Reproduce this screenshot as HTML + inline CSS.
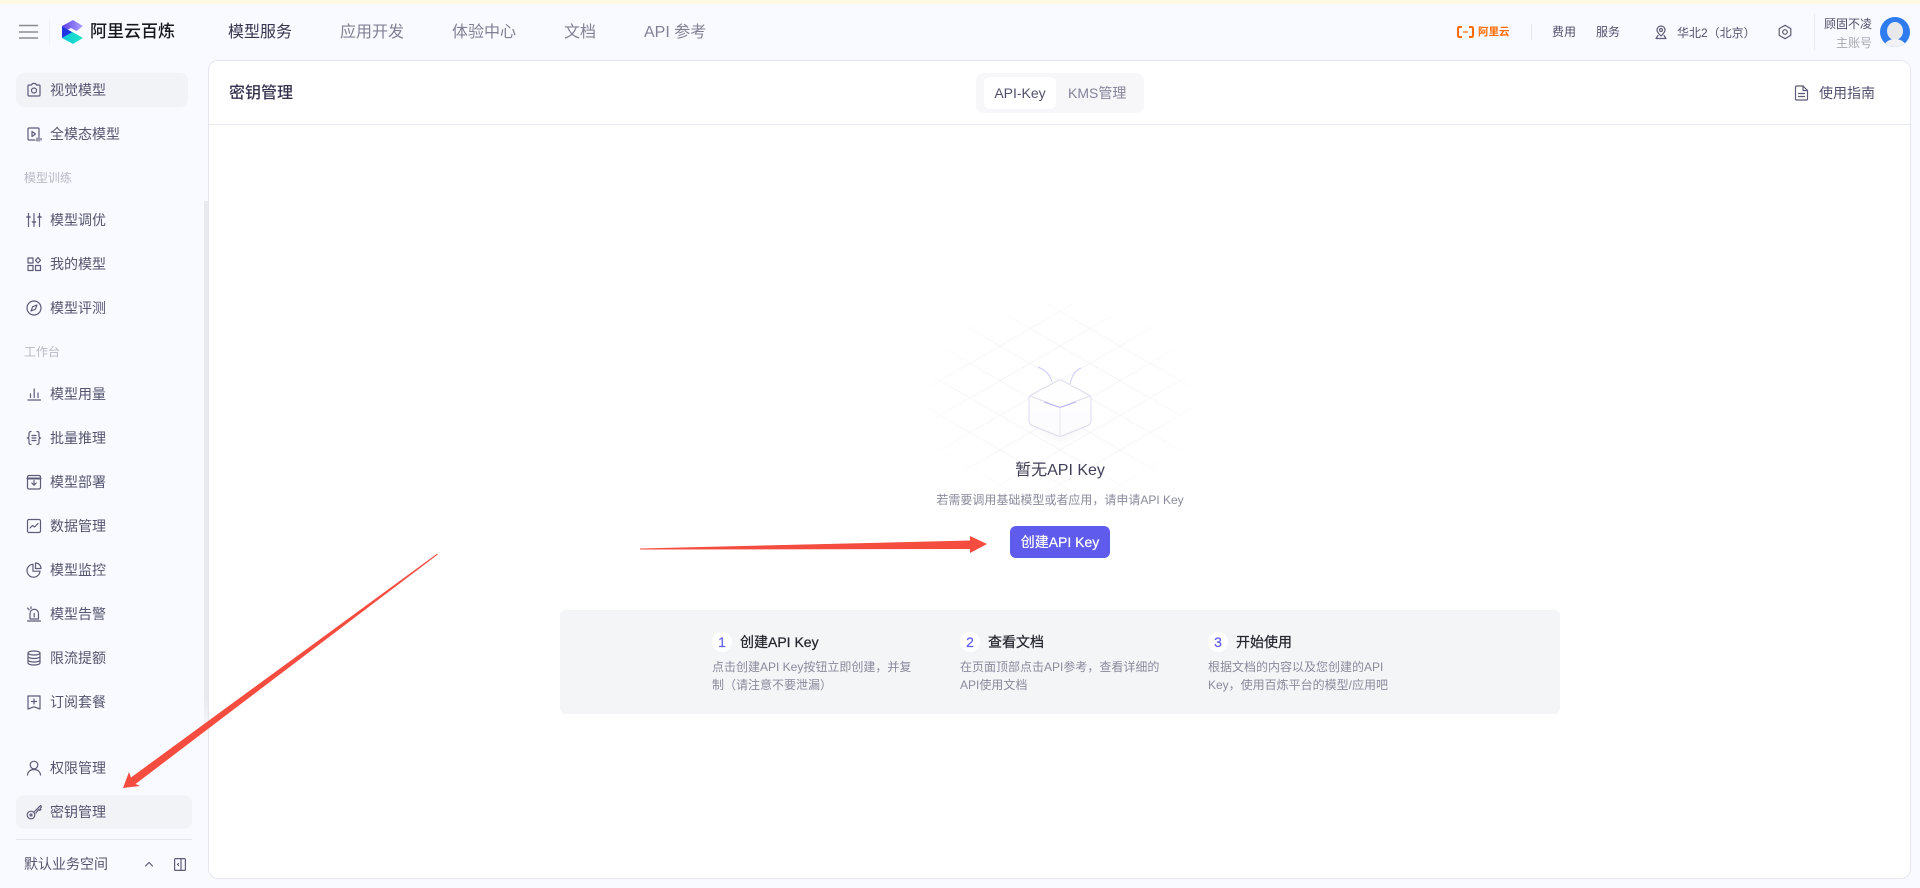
<!DOCTYPE html>
<html lang="zh-CN"><head><meta charset="utf-8"><title>阿里云百炼</title>
<style>
*{box-sizing:border-box}
html,body{margin:0;padding:0;width:1920px;height:888px;overflow:hidden;background:#f9faff}
body{position:relative;font-family:"Liberation Sans","Noto Sans CJK SC",sans-serif;color:#4a4a68}
.t{position:absolute;white-space:nowrap;height:24px;line-height:24px}
.b{position:absolute}
.m{left:50px;font-size:14px;color:#55556f}
.s{left:24px;font-size:12px;color:#b9b9c6}
.n{font-size:16px;color:#808094}
.r{font-size:12px;color:#50506c}
.d{font-size:12px;color:#8a8a9c;height:18px;line-height:18px}
.h{font-size:14px;color:#26262e;-webkit-text-stroke:.25px #26262e}
.c{position:absolute;width:20px;height:20px;border-radius:50%;background:#fff;color:#5f5ced;font-size:14px;line-height:20px;text-align:center;top:632px;-webkit-text-stroke:.2px #5f5ced}
svg.i{position:absolute;fill:none;stroke:#5c5c78;stroke-width:1.2;stroke-linecap:round;stroke-linejoin:round}
</style></head><body>
<div class="b" style="left:0;top:0;width:1920px;height:4px;background:#fff9e3"></div>

<!-- top bar -->
<svg class="i" style="left:19px;top:24px;stroke:#8c8c8c;stroke-width:1.6" width="20" height="16" viewBox="0 0 20 16"><path d="M0 1.500H18.500M0 8H18.500M0 14H18.500"/></svg>
<div class="b" style="left:49px;top:19px;width:1px;height:26px;background:#f0f0f5"></div>
<svg class="b" style="left:0;top:0" width="100" height="50" viewBox="0 0 100 50">
<defs><linearGradient id="g1" x1="0" y1="0" x2="1" y2="0"><stop offset="0" stop-color="#5a3fe8"/><stop offset="1" stop-color="#b0a4ff"/></linearGradient>
<linearGradient id="g2" x1="0" y1="0" x2="1" y2="0"><stop offset="0" stop-color="#0fc6d8"/><stop offset="1" stop-color="#1fe8c8"/></linearGradient></defs>
<path d="M62 26L73 20L83 26L76.500 31L71 28L62 33Z" fill="url(#g1)"/>
<path d="M62 26.500L72.500 32.200L62 38Z" fill="#1c35e0"/>
<path d="M62 38L72.500 32L83 38L73 44Z" fill="url(#g2)"/>
</svg>
<div class="t" style="left:90px;top:20px;font-size:17px;font-weight:500;color:#18181f">阿里云百炼</div>
<div class="t n" style="left:228px;top:21px;color:#35354f">模型服务</div>
<div class="t n" style="left:340px;top:21px">应用开发</div>
<div class="t n" style="left:452px;top:21px">体验中心</div>
<div class="t n" style="left:564px;top:21px">文档</div>
<div class="t n" style="left:644px;top:21px">API 参考</div>

<svg class="b" style="left:1457px;top:26px" width="17" height="12" viewBox="0 0 17 12" fill="none" stroke="#ff6a00" stroke-width="2"><path d="M5 1H2.500Q1 1 1 2.500V9.500Q1 11 2.500 11H5M12 1H14.500Q16 1 16 2.500V9.500Q16 11 14.500 11H12"/><path d="M6 6H11" stroke-width="1.200"/></svg>
<div class="t" style="left:1478px;top:20px;font-size:10.500px;font-weight:700;color:#ff6a00">阿里云</div>
<div class="b" style="left:1531px;top:24px;width:1px;height:16px;background:#e6e7ee"></div>
<div class="t r" style="left:1552px;top:20px">费用</div>
<div class="t r" style="left:1596px;top:20px">服务</div>
<svg class="i" style="left:1654px;top:25px" width="14" height="15" viewBox="0 0 14 15"><path d="M7 1C4.500 1 3 3 3 5C3 7.500 5.500 9.500 7 11C8.500 9.500 11 7.500 11 5C11 3 9.500 1 7 1Z"/><circle cx="7" cy="5" r="1.500"/><path d="M4 10.500L2 13.500H12L10 10.500"/></svg>
<div class="t r" style="left:1677px;top:21px">华北2（北京）</div>
<svg class="i" style="left:1777px;top:24px" width="16" height="16" viewBox="0 0 16 16"><path d="M8 1.300L13.800 4.600V11.400L8 14.700L2.200 11.400V4.600Z"/><circle cx="8" cy="8" r="2.300"/></svg>
<div class="b" style="left:1814px;top:14px;width:1px;height:36px;background:#e9eaf0"></div>
<div class="t r" style="left:1824px;top:12px">顾固不凌</div>
<div class="t r" style="left:1836px;top:31px;color:#a8a8b4">主账号</div>
<svg class="b" style="left:1880px;top:17px" width="30" height="30" viewBox="0 0 30 30"><defs><clipPath id="av"><circle cx="15" cy="15" r="15"/></clipPath></defs><g clip-path="url(#av)"><rect width="30" height="30" fill="#2f7cf0"/><ellipse cx="15" cy="14" rx="8" ry="9" fill="#e8e8ea"/><ellipse cx="15" cy="30" rx="11" ry="8" fill="#f2f2f4"/></g></svg>

<!-- sidebar -->
<div class="b" style="left:204px;top:201px;width:4px;height:540px;background:linear-gradient(#e9eaf0 92%,#f9faff)"></div>
<div class="b" style="left:16px;top:73px;width:172px;height:34px;border-radius:8px;background:#f2f3f7"></div>
<div class="b" style="left:16px;top:795px;width:176px;height:34px;border-radius:8px;background:#f2f3f7"></div>
<div class="b" style="left:16px;top:839px;width:176px;height:1px;background:#e6e7ee"></div>

<svg class="i" style="left:26px;top:82px" width="16" height="16" viewBox="0 0 16 16"><path d="M5.500 3L6.500 1.500H9.500L10.500 3H13Q14 3 14 4V13Q14 14 13 14H3Q2 14 2 13V4Q2 3 3 3Z"/><circle cx="8" cy="8.500" r="2.500"/></svg>
<div class="t m" style="top:78px">视觉模型</div>
<svg class="i" style="left:26px;top:126px" width="16" height="16" viewBox="0 0 16 16"><path d="M9 14H3Q2 14 2 13V3Q2 2 3 2H12Q13 2 13 3V10"/><path d="M6 5.500L9.500 8L6 10.500Z"/><path d="M11 12V15M13 11V15M15 12.500V14"/></svg>
<div class="t m" style="top:122px">全模态模型</div>
<div class="t s" style="top:166px">模型训练</div>
<svg class="i" style="left:26px;top:212px" width="16" height="16" viewBox="0 0 16 16"><path d="M2.500 1.500V14.500M8 1.500V14.500M13.500 1.500V14.500"/><path d="M1 5H4M6.500 10H9.500M12 5H15" stroke-width="1.600"/></svg>
<div class="t m" style="top:208px">模型调优</div>
<svg class="i" style="left:26px;top:256px" width="16" height="16" viewBox="0 0 16 16"><rect x="2" y="2" width="5" height="5"/><rect x="2" y="9.500" width="5" height="5"/><rect x="9.500" y="9.500" width="5" height="5"/><path d="M12 1.500L14.500 4.300L12 7L9.500 4.300Z"/></svg>
<div class="t m" style="top:252px">我的模型</div>
<svg class="i" style="left:26px;top:300px" width="16" height="16" viewBox="0 0 16 16"><circle cx="8" cy="8" r="7"/><path d="M11 5L9.300 9.300L5 11L6.700 6.700Z"/></svg>
<div class="t m" style="top:296px">模型评测</div>
<div class="t s" style="top:340px">工作台</div>
<svg class="i" style="left:26px;top:386px" width="16" height="16" viewBox="0 0 16 16"><path d="M2 14H14.500M4.500 8V11.500M8.200 3V11.500M12 7V11.500"/></svg>
<div class="t m" style="top:382px">模型用量</div>
<svg class="i" style="left:26px;top:430px" width="16" height="16" viewBox="0 0 16 16"><path d="M5 1.500Q3 1.500 3 3.500V6Q3 8 1.300 8Q3 8 3 10V12.500Q3 14.500 5 14.500M11 1.500Q13 1.500 13 3.500V6Q13 8 14.700 8Q13 8 13 10V12.500Q13 14.500 11 14.500M6 5.500H10M6 8H10M6 10.500H10"/></svg>
<div class="t m" style="top:426px">批量推理</div>
<svg class="i" style="left:26px;top:474px" width="16" height="16" viewBox="0 0 16 16"><rect x="1.500" y="1.500" width="13" height="13.500" rx="1.500"/><path d="M1.500 4.500H14.500" stroke-width="2"/><path d="M8 6.500V11M5.800 9L8 11.200L10.200 9"/></svg>
<div class="t m" style="top:470px">模型部署</div>
<svg class="i" style="left:26px;top:518px" width="16" height="16" viewBox="0 0 16 16"><rect x="1.500" y="1.500" width="13" height="13" rx="1.500"/><path d="M4 10L6.500 7.500L8.500 9L12 5.500"/></svg>
<div class="t m" style="top:514px">数据管理</div>
<svg class="i" style="left:26px;top:562px" width="16" height="16" viewBox="0 0 16 16"><path d="M7 2.200A6.500 6.500 0 1 0 14 9.200H7Z"/><path d="M9.500 1A5.500 5.500 0 0 1 15 6.500H9.500Z"/></svg>
<div class="t m" style="top:558px">模型监控</div>
<svg class="i" style="left:26px;top:606px" width="16" height="16" viewBox="0 0 16 16"><path d="M4 13V7.500A4.200 4.200 0 0 1 12.500 7.500V13H4ZM1.500 15H14.500M8.200 7.500V11M1.500 2L3.200 3.800M5 .8V2.500"/></svg>
<div class="t m" style="top:602px">模型告警</div>
<svg class="i" style="left:26px;top:650px" width="16" height="16" viewBox="0 0 16 16"><ellipse cx="8" cy="3" rx="6" ry="2"/><path d="M2 3V13C2 14.100 4.700 15 8 15C11.300 15 14 14.100 14 13V3M2 6.500C2 7.600 4.700 8.500 8 8.500C11.300 8.500 14 7.600 14 6.500M2 10C2 11.100 4.700 12 8 12C11.300 12 14 11.100 14 10"/></svg>
<div class="t m" style="top:646px">限流提额</div>
<svg class="i" style="left:26px;top:694px" width="16" height="16" viewBox="0 0 16 16"><path d="M2 2H14V15L8 12.800L2 15Z"/><path d="M8 5V10M5.500 7.500H10.500"/></svg>
<div class="t m" style="top:690px">订阅套餐</div>
<svg class="i" style="left:26px;top:760px" width="16" height="16" viewBox="0 0 16 16"><circle cx="8" cy="5" r="3.800"/><path d="M1.500 15C1.800 11.500 4.500 9.500 8 9.500C11.500 9.500 14.200 11.500 14.500 15"/></svg>
<div class="t m" style="top:756px">权限管理</div>
<svg class="i" style="left:26px;top:804px" width="16" height="16" viewBox="0 0 16 16"><circle cx="5" cy="11" r="3.800"/><circle cx="5" cy="11" r="1"/><path d="M8 8L13 3L14.700 1.500L15.500 3L14 4.500L15 5.500L13.500 6.500L12.500 5.500L10 9"/></svg>
<div class="t m" style="top:800px">密钥管理</div>
<div class="t m" style="left:24px;top:852px">默认业务空间</div>
<svg class="i" style="left:144px;top:860px" width="10" height="8" viewBox="0 0 10 8"><path d="M1.500 6L5 2.500L8.500 6"/></svg>
<svg class="i" style="left:174px;top:858px" width="12" height="13" viewBox="0 0 12 13"><rect x=".6" y=".6" width="10.800" height="11.800" rx="1.200"/><path d="M7 .6V12.400M4.500 5.500L3.500 6.500L4.500 7.500"/></svg>

<!-- main panel -->
<div class="b" style="left:208px;top:60px;width:1703px;height:819px;background:#fff;border:1px solid #e6e7ee;border-radius:10px"></div>
<div class="b" style="left:209px;top:124px;width:1701px;height:1px;background:#e9eaf0"></div>
<div class="t" style="left:229px;top:82px;font-size:16px;font-weight:500;color:#33334f">密钥管理</div>
<div class="b" style="left:976px;top:73px;width:168px;height:40px;background:#f7f7fa;border-radius:8px"></div>
<div class="b" style="left:984px;top:77px;width:72px;height:32px;background:#fff;border-radius:6px"></div>
<div class="t" style="left:984px;width:72px;top:81px;text-align:center;font-size:14px;color:#50506c">API-Key</div>
<div class="t" style="left:1068px;top:81px;font-size:14px;color:#84849a">KMS管理</div>
<svg class="i" style="left:1794px;top:85px" width="15" height="16" viewBox="0 0 15 16"><path d="M9 1H2.500Q1.500 1 1.500 2V14Q1.500 15 2.500 15H12.500Q13.500 15 13.500 14V5.500Z"/><path d="M9 1V5.500H13.500M4.500 8.500H10.500M4.500 11.500H10.500"/></svg>
<div class="t" style="left:1819px;top:81px;font-size:14px;color:#50506c">使用指南</div>

<!-- illustration -->
<svg class="b" style="left:900px;top:290px" width="320" height="220" viewBox="900 290 320 220">
<defs>
<pattern id="grid" patternUnits="userSpaceOnUse" x="1000" y="346" width="60" height="34.640">
<path d="M0 0L60 34.640M0 34.640L60 0" stroke="#f3f3f5" stroke-width="1" fill="none"/>
</pattern>
<radialGradient id="fade" gradientUnits="userSpaceOnUse" cx="1060" cy="400" r="145" gradientTransform="translate(0 100) scale(1 .75)"><stop offset="0" stop-color="#fff"/><stop offset=".7" stop-color="#aaa"/><stop offset="1" stop-color="#000"/></radialGradient>
<mask id="mk"><rect x="900" y="290" width="320" height="220" fill="url(#fade)"/></mask>
<linearGradient id="fc" x1="0" y1="0" x2="0" y2="1"><stop offset="0" stop-color="#fff"/><stop offset="1" stop-color="#fbfbfd"/></linearGradient>
<filter id="sh" x="-30%" y="-30%" width="160%" height="170%"><feGaussianBlur stdDeviation="5"/></filter>
</defs>
<rect x="900" y="290" width="320" height="220" fill="url(#grid)" mask="url(#mk)"/>
<path d="M1032 424L1060 440L1088 424L1060 412Z" fill="#e2e2ea" filter="url(#sh)" opacity=".45"/>
<path d="M1057 381L1032 394.500Q1029 396 1029 399V421Q1029 424 1032 425.500L1057 435.500Q1060 437 1063 435.500L1088 425.500Q1091 424 1091 421V399Q1091 396 1088 394.500L1063 381Q1060 379 1057 381Z" fill="url(#fc)" stroke="#dcdcec" stroke-width="1"/>
<path d="M1030 396L1060 407.500L1090 396" fill="none" stroke="#ddddf0" stroke-width="1"/>
<path d="M1044 402L1060 407.500L1076 402" fill="none" stroke="#b4b0f5" stroke-width="1"/>
<path d="M1060 407.500V437" stroke="#e6e6f0" stroke-width="1"/>
<path d="M1038 367Q1049 371 1052 382" fill="none" stroke="#cfcdf8" stroke-width="1"/>
<path d="M1081 368Q1073 371 1070 384" fill="none" stroke="#cfcdf8" stroke-width="1"/>
</svg>
<div class="t" style="left:900px;width:320px;top:459px;text-align:center;font-size:16px;color:#40405a">暂无API Key</div>
<div class="t" style="left:900px;width:320px;top:488px;text-align:center;font-size:12px;color:#8a8a9c">若需要调用基础模型或者应用，请申请API Key</div>
<div class="b" style="left:1010px;top:526px;width:100px;height:32px;background:#5f5ced;border-radius:6px"></div>
<div class="t" style="left:1010px;width:100px;top:530px;text-align:center;font-size:14px;color:#fff;-webkit-text-stroke:.2px #fff">创建API Key</div>

<!-- steps -->
<div class="b" style="left:560px;top:610px;width:1000px;height:104px;background:#f4f5f7;border-radius:6px"></div>
<div class="c" style="left:712px">1</div>
<div class="t h" style="left:740px;top:630px">创建API Key</div>
<div class="t d" style="left:712px;top:658px">点击创建API Key按钮立即创建，并复</div>
<div class="t d" style="left:712px;top:676px">制（请注意不要泄漏）</div>
<div class="c" style="left:960px">2</div>
<div class="t h" style="left:988px;top:630px">查看文档</div>
<div class="t d" style="left:960px;top:658px">在页面顶部点击API参考，查看详细的</div>
<div class="t d" style="left:960px;top:676px">API使用文档</div>
<div class="c" style="left:1208px">3</div>
<div class="t h" style="left:1236px;top:630px">开始使用</div>
<div class="t d" style="left:1208px;top:658px">根据文档的内容以及您创建的API</div>
<div class="t d" style="left:1208px;top:676px">Key，使用百炼平台的模型/应用吧</div>

<!-- annotation arrows -->
<svg class="b" style="left:0;top:0;pointer-events:none" width="1920" height="888" viewBox="0 0 1920 888">
<path d="M640 548.500L970 540.500L970 536L987 544L970 553L970 549L640 549.500Z" fill="#f44d3f"/>
<path d="M437 553.700L437.800 554.500L135.500 784L140 786L123 788L129 772L131 777.500Z" fill="#f44d3f"/>
</svg>
</body></html>
